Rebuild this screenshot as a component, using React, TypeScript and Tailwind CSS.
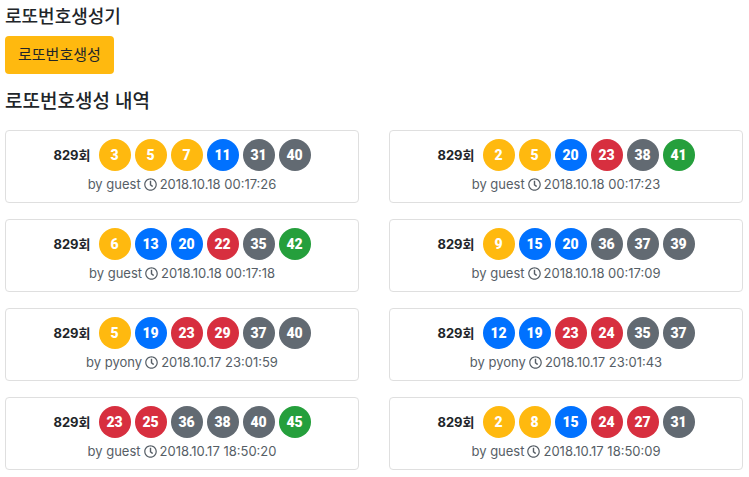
import clsx from "clsx";
import { FaRegClock } from "react-icons/fa";

type Draw = {
  id: number;
  round: number;
  numbers: number[];
  author: string;
  createdAt: string;
};

const draws: Draw[] = [
  { id: 8, round: 829, numbers: [3, 5, 7, 11, 31, 40], author: "guest", createdAt: "2018.10.18 00:17:26" },
  { id: 7, round: 829, numbers: [2, 5, 20, 23, 38, 41], author: "guest", createdAt: "2018.10.18 00:17:23" },
  { id: 6, round: 829, numbers: [6, 13, 20, 22, 35, 42], author: "guest", createdAt: "2018.10.18 00:17:18" },
  { id: 5, round: 829, numbers: [9, 15, 20, 36, 37, 39], author: "guest", createdAt: "2018.10.18 00:17:09" },
  { id: 4, round: 829, numbers: [5, 19, 23, 29, 37, 40], author: "pyony", createdAt: "2018.10.17 23:01:59" },
  { id: 3, round: 829, numbers: [12, 19, 23, 24, 35, 37], author: "pyony", createdAt: "2018.10.17 23:01:43" },
  { id: 2, round: 829, numbers: [23, 25, 36, 38, 40, 45], author: "guest", createdAt: "2018.10.17 18:50:20" },
  { id: 1, round: 829, numbers: [2, 8, 15, 24, 27, 31], author: "guest", createdAt: "2018.10.17 18:50:09" },
];

function ballColor(n: number) {
  if (n <= 10) return "bg-[#ffb90f]";
  if (n <= 20) return "bg-[#0071ff]";
  if (n <= 30) return "bg-[#d72f3f]";
  if (n <= 40) return "bg-[#626a72]";
  return "bg-[#259f3c]";
}

function Ball({ n }: { n: number }) {
  return (
    <span
      className={clsx(
        "flex size-8 items-center justify-center rounded-full font-['Roboto',sans-serif] text-sm font-black text-white",
        ballColor(n),
      )}
    >
      {n}
    </span>
  );
}

function DrawCard({ draw }: { draw: Draw }) {
  return (
    <li className="flex flex-col items-center rounded border border-[#dfdfdf] px-2 pt-2 pb-2">
      <div className="flex items-center gap-2">
        <strong className="text-[13px] leading-5 font-bold">{draw.round}회</strong>
        <div className="flex gap-1">
          {draw.numbers.map((n) => (
            <Ball key={n} n={n} />
          ))}
        </div>
      </div>
      <p className="mt-[3px] flex items-center gap-[3px] text-[13px] leading-5 text-[#565e66]">
        <span>by {draw.author}</span>
        <FaRegClock size={13} />
        <time>{draw.createdAt}</time>
      </p>
    </li>
  );
}

export default function App() {
  return (
    <main className="bg-white pt-[5px] pr-1.5 pb-2 pl-[5px] font-['Inter','Noto_Sans_CJK_KR',sans-serif] text-[#212529]">
      <h1 className="text-lg leading-6 font-medium">로또번호생성기</h1>
      <button type="button" className="mt-[7px] h-[38px] rounded bg-[#ffb90f] px-[13px] text-[15px] leading-6">
        로또번호생성
      </button>

      <h2 className="mt-4 text-[19px] leading-6 font-medium">로또번호생성 내역</h2>
      <ul className="mt-4 grid grid-cols-2 gap-x-[30px] gap-y-4">
        {draws.map((draw) => (
          <DrawCard key={draw.id} draw={draw} />
        ))}
      </ul>
    </main>
  );
}
